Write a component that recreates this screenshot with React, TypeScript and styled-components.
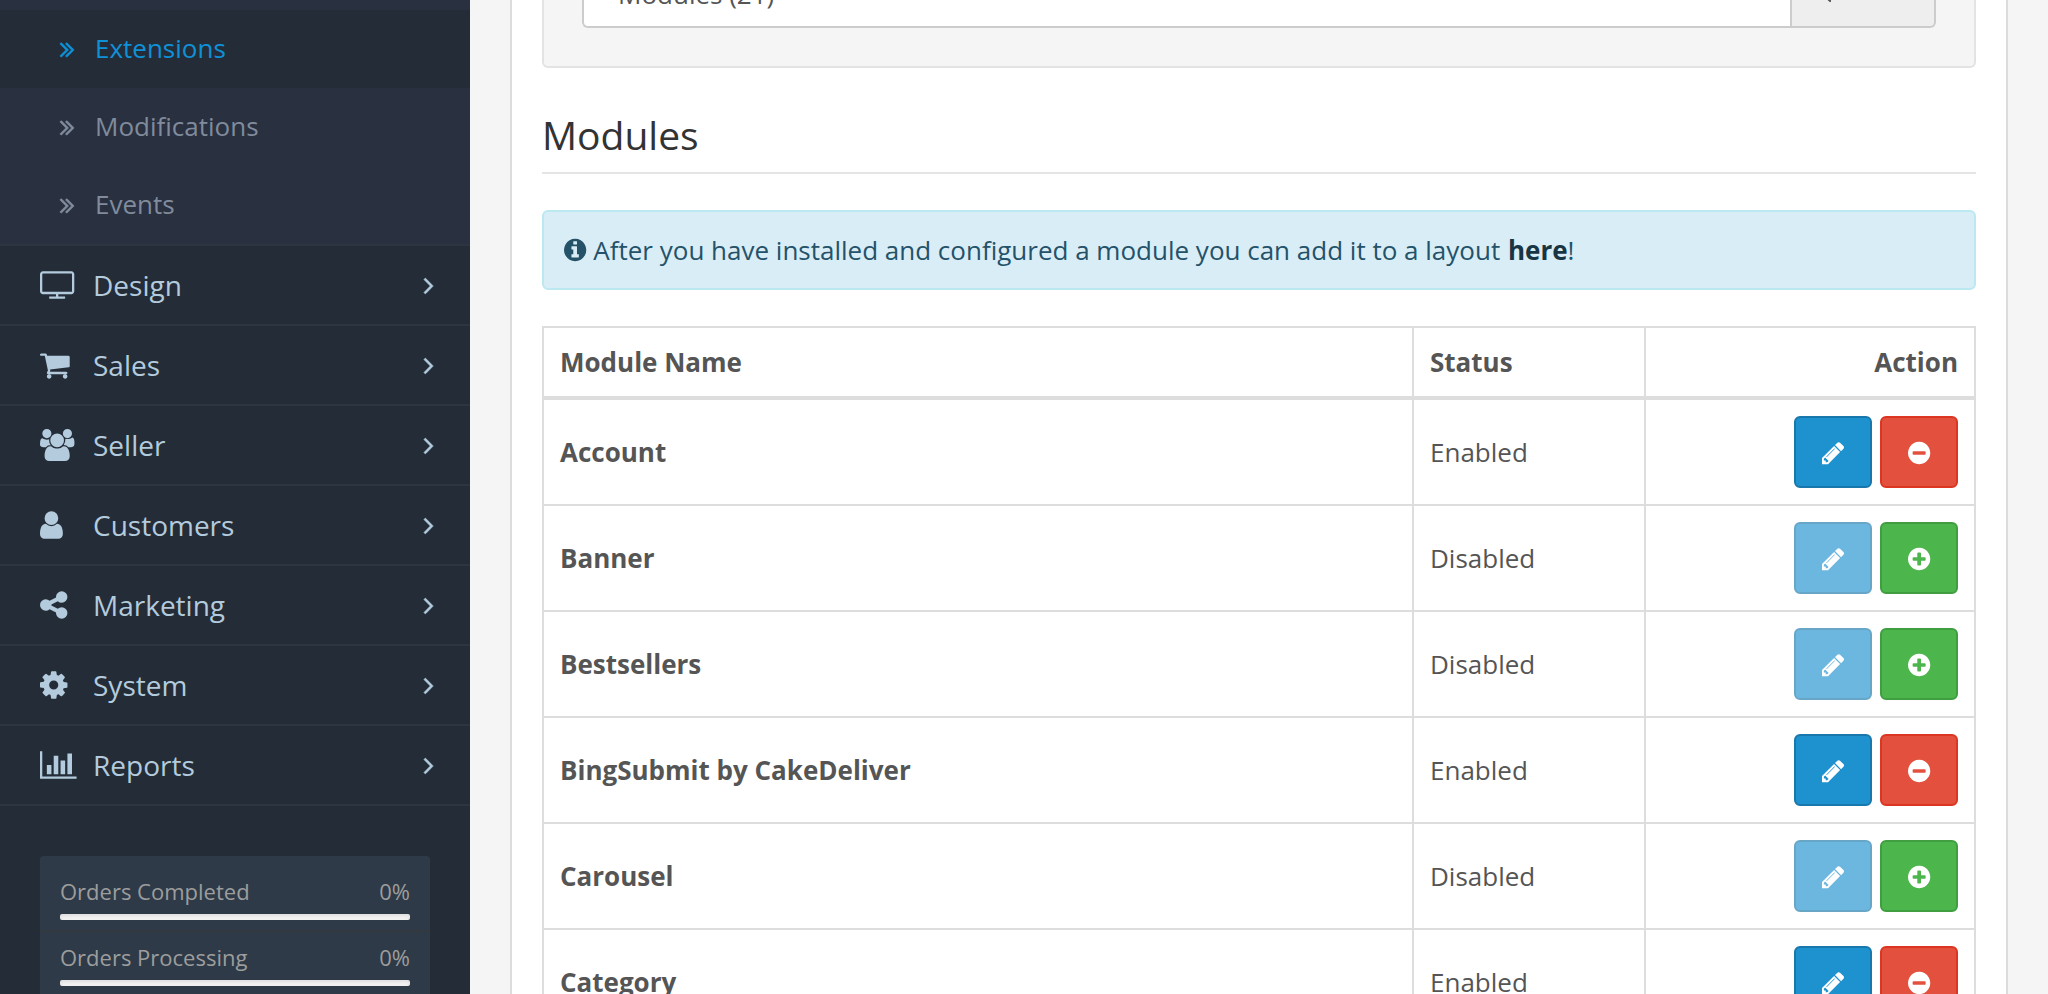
import React from 'react';
import styled, { createGlobalStyle } from 'styled-components';

const GlobalStyle = createGlobalStyle`
  *, *::before, *::after { box-sizing: border-box; }
  html, body { margin: 0; height: 100%; overflow: hidden; }
  body {
    background: #f5f5f5;
    color: #555;
    font-family: 'Open Sans', sans-serif;
    font-size: 26px;
    line-height: 36px;
  }
`;

/* ---------- icons ---------- */

const disc =
  'zM1664 896q0 209-103 385.5t-279.5 279.5-385.5 103-385.5-103-279.5-279.5-103-385.5 103-385.5 279.5-279.5 385.5-103 385.5 103 279.5 279.5 103 385.5z';

type Glyph = { x: number; w: number; d: string };

const glyphs = {
  angleRight: { x: 589, w: 640, d: 'M1171 960q0 13-10 23l-466 466q-10 10-23 10t-23-10l-50-50q-10-10-10-23t10-23l393-393-393-393q-10-10-10-23t10-23l50-50q10-10 23-10t23 10l466 466q10 10 10 23z' },
  angleDoubleRight: { x: 397, w: 1024, d: 'M979 960q0 13-10 23l-466 466q-10 10-23 10t-23-10l-50-50q-10-10-10-23t10-23l393-393-393-393q-10-10-10-23t10-23l50-50q10-10 23-10t23 10l466 466q10 10 10 23zm384 0q0 13-10 23l-466 466q-10 10-23 10t-23-10l-50-50q-10-10-10-23t10-23l393-393-393-393q-10-10-10-23t10-23l50-50q10-10 23-10t23 10l466 466q10 10 10 23z' },
  television: { x: 0, w: 1920, d: 'M1792 1248v-960q0-13-9.5-22.5t-22.5-9.5h-1600q-13 0-22.5 9.5t-9.5 22.5v960q0 13 9.5 22.5t22.5 9.5h1600q13 0 22.5-9.5t9.5-22.5zm128-960v960q0 66-47 113t-113 47h-736v128h352q14 0 23 9t9 23v64q0 14-9 23t-23 9h-832q-14 0-23-9t-9-23v-64q0-14 9-23t23-9h352v-128h-736q-66 0-113-47t-47-113v-960q0-66 47-113t113-47h1600q66 0 113 47t47 113z' },
  cart: { x: 64, w: 1664, d: 'M704 1536q0 52-38 90t-90 38-90-38-38-90 38-90 90-38 90 38 38 90zm896 0q0 52-38 90t-90 38-90-38-38-90 38-90 90-38 90 38 38 90zm128-1088v512q0 24-16.5 42.5t-40.5 21.5l-1044 122q13 60 13 70 0 16-24 64h920q26 0 45 19t19 45-19 45-45 19h-1024q-26 0-45-19t-19-45q0-11 8-31.5t16-36 21.5-40 15.5-29.5l-177-823h-204q-26 0-45-19t-19-45 19-45 45-19h256q16 0 28.5 6.5t19.5 15.5 13 24.5 8 26 5.5 29.5 4.5 26h1201q26 0 45 19t19 45z' },
  users: { x: 64, w: 1920, d: 'M657 896q-162 5-265 128h-134q-82 0-138-40.5t-56-118.5q0-353 124-353 6 0 43.5 21t97.5 42.5 119 21.5q67 0 133-23-5 37-5 66 0 159 93 291zm1071 637q0 120-73 189.5t-194 69.5h-874q-121 0-194-69.5t-73-189.5q0-53 3.5-103.5t14-109 26.5-108.5 43-97.5 62-81 85.5-53.5 111.5-20q10 0 43 21.5t73 48 107 48 135 21.5 135-21.5 107-48 73-48 43-21.5q61 0 111.5 20t85.5 53.5 62 81 43 97.5 26.5 108.5 14 109 3.5 103.5zm-1024-1277q0 106-75 181t-181 75-181-75-75-181 75-181 181-75 181 75 75 181zm704 384q0 159-112.5 271.5t-271.5 112.5-271.5-112.5-112.5-271.5 112.5-271.5 271.5-112.5 271.5 112.5 112.5 271.5zm576 225q0 78-56 118.5t-138 40.5h-134q-103-123-265-128 93-132 93-291 0-29-5-66 66 23 133 23 59 0 119-21.5t97.5-42.5 43.5-21q124 0 124 353zm-128-609q0 106-75 181t-181 75-181-75-75-181 75-181 181-75 181 75 75 181z' },
  user: { x: 256, w: 1280, d: 'M1536 1399q0 109-62.5 187t-150.5 78h-854q-88 0-150.5-78t-62.5-187q0-85 8.5-160.5t31.5-152 58.5-131 94-89 134.5-34.5q131 128 313 128t313-128q76 0 134.5 34.5t94 89 58.5 131 31.5 152 8.5 160.5zm-256-887q0 159-112.5 271.5t-271.5 112.5-271.5-112.5-112.5-271.5 112.5-271.5 271.5-112.5 271.5 112.5 112.5 271.5z' },
  share: { x: 128, w: 1536, d: 'M1344 1024q133 0 226.5 93.5t93.5 226.5-93.5 226.5-226.5 93.5-226.5-93.5-93.5-226.5q0-12 2-34l-360-180q-92 86-218 86-133 0-226.5-93.5t-93.5-226.5 93.5-226.5 226.5-93.5q126 0 218 86l360-180q-2-22-2-34 0-133 93.5-226.5t226.5-93.5 226.5 93.5 93.5 226.5-93.5 226.5-226.5 93.5q-126 0-218-86l-360 180q2 22 2 34t-2 34l360 180q92-86 218-86z' },
  cog: { x: 128, w: 1536, d: 'M1152 896q0-106-75-181t-181-75-181 75-75 181 75 181 181 75 181-75 75-181zm512-109v222q0 12-8 23t-20 13l-185 28q-19 54-39 91 35 50 107 138 10 12 10 25t-9 23q-27 37-99 108t-94 71q-12 0-26-9l-138-108q-44 23-91 38-16 136-29 186-7 28-36 28h-222q-14 0-24.5-8.5t-11.5-21.5l-28-184q-49-16-90-37l-141 107q-10 9-25 9-14 0-25-11-126-114-165-168-7-10-7-23 0-12 8-23 15-21 51-66.5t54-70.5q-27-50-41-99l-183-27q-13-2-21-12.5t-8-23.5v-222q0-12 8-23t19-13l186-28q14-46 39-92-40-57-107-138-10-12-10-24 0-10 9-23 26-36 98.5-107.5t94.5-71.5q13 0 26 10l138 107q44-23 91-38 16-136 29-186 7-28 36-28h222q14 0 24.5 8.5t11.5 21.5l28 184q49 16 90 37l142-107q9-9 24-9 13 0 25 10 129 119 165 170 7 8 7 22 0 12-8 23-15 21-51 66.5t-54 70.5q26 50 41 98l183 28q13 2 21 12.5t8 23.5z' },
  chart: { x: 0, w: 2048, d: 'M640 896v512h-256v-512h256zm384-512v1024h-256v-1024h256zm1024 1152v128h-2048v-1536h128v1408h1920zm-640-896v768h-256v-768h256zm384-384v1152h-256v-1152h256z' },
  pencil: { x: 128, w: 1536, d: 'M491 1536l91-91-235-235-91 91v107h128v128h107zm523-928q0-22-22-22-10 0-17 7l-542 542q-7 7-7 17 0 22 22 22 10 0 17-7l542-542q7-7 7-17zm-54-192l416 416-832 832h-416v-416zm683 96q0 53-37 90l-166 166-416-416 166-165q36-38 90-38 53 0 91 38l235 234q37 39 37 91z' },
  minus: { x: 128, w: 1536, d: 'M1344 960v-128q0-26-19-45t-45-19h-768q-26 0-45 19t-19 45v128q0 26 19 45t45 19h768q26 0 45-19t19-45' + disc },
  plus: { x: 128, w: 1536, d: 'M1344 960v-128q0-26-19-45t-45-19h-256v-256q0-26-19-45t-45-19h-128q-26 0-45 19t-19 45v256h-256q-26 0-45 19t-19 45v128q0 26 19 45t45 19h256v256q0 26 19 45t45 19h128q26 0 45-19t19-45v-256h256q26 0 45-19t19-45' + disc },
  info: { x: 128, w: 1536, d: 'M1152 1376v-160q0-14-9-23t-23-9h-96v-512q0-14-9-23t-23-9h-320q-14 0-23 9t-9 23v160q0 14 9 23t23 9h96v320h-96q-14 0-23 9t-9 23v160q0 14 9 23t23 9h448q14 0 23-9t9-23zM1024 480v-160q0-14-9-23t-23-9h-192q-14 0-23 9t-9 23v160q0 14 9 23t23 9h192q14 0 23-9t9-23' + disc },
  filter: { x: 192, w: 1408, d: 'M1595 295q17 41-14 70l-493 493v742q0 42-39 59-13 5-25 5-27 0-45-19l-256-256q-19-19-19-45v-486l-493-493q-31-29-14-70 17-39 59-39h1280q42 0 59 39z' },
} satisfies Record<string, Glyph>;

type IconName = keyof typeof glyphs;

const Svg = styled.svg<{ $bold?: boolean }>`
  display: block;
  flex: none;
  overflow: visible;
  fill: currentColor;
  stroke: ${(p) => (p.$bold ? 'currentColor' : 'none')};
  stroke-width: 36;
`;

function Icon({ name, size, bold }: { name: IconName; size: number; bold?: boolean }) {
  const g = glyphs[name];
  return (
    <Svg
      $bold={bold}
      width={(g.w * size) / 1792}
      height={size}
      viewBox={`${g.x} 0 ${g.w} 1792`}
      fillRule="evenodd"
      aria-hidden
    >
      <path d={g.d} />
    </Svg>
  );
}

/* ---------- shell ---------- */

const Page = styled.div`
  display: flex;
  height: 994px;
  overflow: hidden;
`;

const Sidebar = styled.nav`
  flex: none;
  width: 470px;
  background: #242d37;
`;

const SubMenu = styled.ul`
  margin: 0;
  padding: 10px 0 0;
  list-style: none;
  background: #293040;
  border-bottom: 2px solid #2b3640;
`;

const SubItem = styled.li<{ $active?: boolean }>`
  display: flex;
  align-items: center;
  height: 78px;
  padding: 0 0 2px 60px;
  background: ${(p) => (p.$active ? '#242d37' : 'transparent')};
  color: ${(p) => (p.$active ? '#0f91d7' : '#808b9c')};
`;

const SubIcon = styled.span`
  width: 35px;
  padding-top: 1px;
`;

const Menu = styled.ul`
  margin: 0;
  padding: 0;
  list-style: none;
`;

const MenuItem = styled.li`
  display: flex;
  align-items: center;
  height: 80px;
  padding: 0 36px 0 40px;
  border-bottom: 2px solid #2b3640;
  color: #b3cbdd;
  font-size: 28px;
`;

const MenuIcon = styled.span`
  width: 53px;
  padding-bottom: 1px;
`;

const MenuLabel = styled.span`
  flex: 1;
`;

const Stats = styled.ul`
  margin: 50px 40px 0;
  padding: 10px 0;
  height: 300px;
  list-style: none;
  background: #2e3a47;
  border-radius: 4px;
`;

const Stat = styled.li`
  height: 66px;
  padding: 10px 20px 0;
  border-bottom: 2px dotted #373737;
  color: #9d9d9d;
  font-size: 22px;
  line-height: 30px;
`;

const StatText = styled.div`
  display: flex;
  justify-content: space-between;
  margin-bottom: 8px;
`;

const StatBar = styled.div`
  height: 6px;
  border-radius: 2px;
  background: #f5f5f5;
  box-shadow: inset 0 2px 4px rgba(0, 0, 0, 0.1);
`;

/* ---------- content ---------- */

const Content = styled.main`
  flex: 1;
  padding: 0 40px;
`;

const Panel = styled.section`
  height: 1100px;
  padding: 0 30px;
  background: #fff;
  border: 2px solid #dcdcdc;
  border-width: 0 2px;
`;

const Well = styled.div`
  display: flex;
  align-items: flex-end;
  height: 68px;
  padding: 0 38px 38px;
  background: #f5f5f5;
  border: 2px solid #e3e3e3;
  border-top: 0;
  border-radius: 0 0 6px 6px;
`;

const Select = styled.div`
  display: flex;
  align-items: flex-end;
  flex: 1;
  height: 28px;
  padding: 0 34px 14px;
  overflow: hidden;
  background: #fff;
  border: 2px solid #ccc;
  border-width: 0 0 2px 2px;
  border-radius: 0 0 0 6px;
`;

const FilterButton = styled.div`
  display: flex;
  align-items: flex-end;
  flex: none;
  width: 146px;
  height: 28px;
  padding: 0 26px 22px;
  overflow: hidden;
  background: #eee;
  border: 2px solid #ccc;
  border-top: 0;
  border-radius: 0 0 6px 0;
`;

const Legend = styled.h3`
  margin: 38px 0 36px;
  padding: 1px 0 0;
  height: 68px;
  border-bottom: 2px solid #e5e5e5;
  color: #333;
  font-size: 39px;
  font-weight: 400;
  line-height: 56px;
`;

const Alert = styled.div`
  display: flex;
  align-items: center;
  gap: 7px;
  height: 80px;
  margin-bottom: 36px;
  padding: 0 20px;
  background: #d9edf7;
  border: 2px solid #bce8f1;
  border-radius: 6px;
  color: #245269;
`;

const AlertLink = styled.b`
  margin-left: 1px;
  color: #173543;
`;

const Table = styled.table`
  width: 100%;
  table-layout: fixed;
  border-collapse: separate;
  border-spacing: 0;
  border: 2px solid #ddd;
  border-bottom: 0;
`;

const Cell = styled.td<{ $width?: number; $strong?: boolean; $right?: boolean }>`
  width: ${(p) => (p.$width ? `${p.$width}px` : 'auto')};
  height: 106px;
  padding: 0 16px;
  border-bottom: 2px solid #ddd;
  border-right: 2px solid #ddd;
  font-weight: ${(p) => (p.$strong ? 700 : 400)};
  text-align: ${(p) => (p.$right ? 'right' : 'left')};
  vertical-align: middle;
  &:last-child { border-right: 0; }
`;

const HeadCell = styled(Cell)`
  height: 72px;
  border-bottom-width: 4px;
`;

const Actions = styled.div`
  display: flex;
  justify-content: flex-end;
  gap: 8px;
`;

const tones = {
  primary: ['#1e91cf', '#1978ab'],
  danger: ['#e3503e', '#dc3522'],
  success: ['#4cb64c', '#409e40'],
};

const Button = styled.button<{ $tone: keyof typeof tones }>`
  display: flex;
  align-items: center;
  justify-content: center;
  width: 78px;
  height: 72px;
  padding: ${(p) => (p.$tone === 'primary' ? '2px 0 0 1px' : '1px 0 0')};
  color: #fff;
  background: ${(p) => tones[p.$tone][0]};
  border: 2px solid ${(p) => tones[p.$tone][1]};
  border-radius: 6px;
  &:disabled { opacity: 0.65; }
`;

const menu: [IconName, string][] = [
  ['television', 'Design'],
  ['cart', 'Sales'],
  ['users', 'Seller'],
  ['user', 'Customers'],
  ['share', 'Marketing'],
  ['cog', 'System'],
  ['chart', 'Reports'],
];

const modules: [string, boolean][] = [
  ['Account', true],
  ['Banner', false],
  ['Bestsellers', false],
  ['BingSubmit by CakeDeliver', true],
  ['Carousel', false],
  ['Category', true],
];

export default function App() {
  return (
    <Page>
      <GlobalStyle />
      <Sidebar>
        <SubMenu>
          {['Extensions', 'Modifications', 'Events'].map((label, i) => (
            <SubItem key={label} $active={i === 0}>
              <SubIcon><Icon name="angleDoubleRight" size={26} bold /></SubIcon>
              {label}
            </SubItem>
          ))}
        </SubMenu>
        <Menu>
          {menu.map(([icon, label]) => (
            <MenuItem key={label}>
              <MenuIcon><Icon name={icon} size={32} /></MenuIcon>
              <MenuLabel>{label}</MenuLabel>
              <Icon name="angleRight" size={28} bold />
            </MenuItem>
          ))}
        </Menu>
        <Stats>
          {['Orders Completed', 'Orders Processing'].map((label) => (
            <Stat key={label}>
              <StatText><span>{label}</span><span>0%</span></StatText>
              <StatBar />
            </Stat>
          ))}
        </Stats>
      </Sidebar>
      <Content>
        <Panel>
          <Well>
            <Select>Modules (21)</Select>
            <FilterButton><Icon name="filter" size={26} /></FilterButton>
          </Well>
          <Legend>Modules</Legend>
          <Alert>
            <Icon name="info" size={26} />
            <span>
              After you have installed and configured a module you can add it to a layout{' '}
              <AlertLink>here</AlertLink>!
            </span>
          </Alert>
          <Table>
            <thead>
              <tr>
                <HeadCell as="th" $strong>Module Name</HeadCell>
                <HeadCell as="th" $width={232} $strong>Status</HeadCell>
                <HeadCell as="th" $width={328} $strong $right>Action</HeadCell>
              </tr>
            </thead>
            <tbody>
              {modules.map(([name, enabled]) => (
                <tr key={name}>
                  <Cell $strong>{name}</Cell>
                  <Cell>{enabled ? 'Enabled' : 'Disabled'}</Cell>
                  <Cell $right>
                    <Actions>
                      <Button $tone="primary" disabled={!enabled}><Icon name="pencil" size={26} /></Button>
                      <Button $tone={enabled ? 'danger' : 'success'}>
                        <Icon name={enabled ? 'minus' : 'plus'} size={26} />
                      </Button>
                    </Actions>
                  </Cell>
                </tr>
              ))}
            </tbody>
          </Table>
        </Panel>
      </Content>
    </Page>
  );
}
